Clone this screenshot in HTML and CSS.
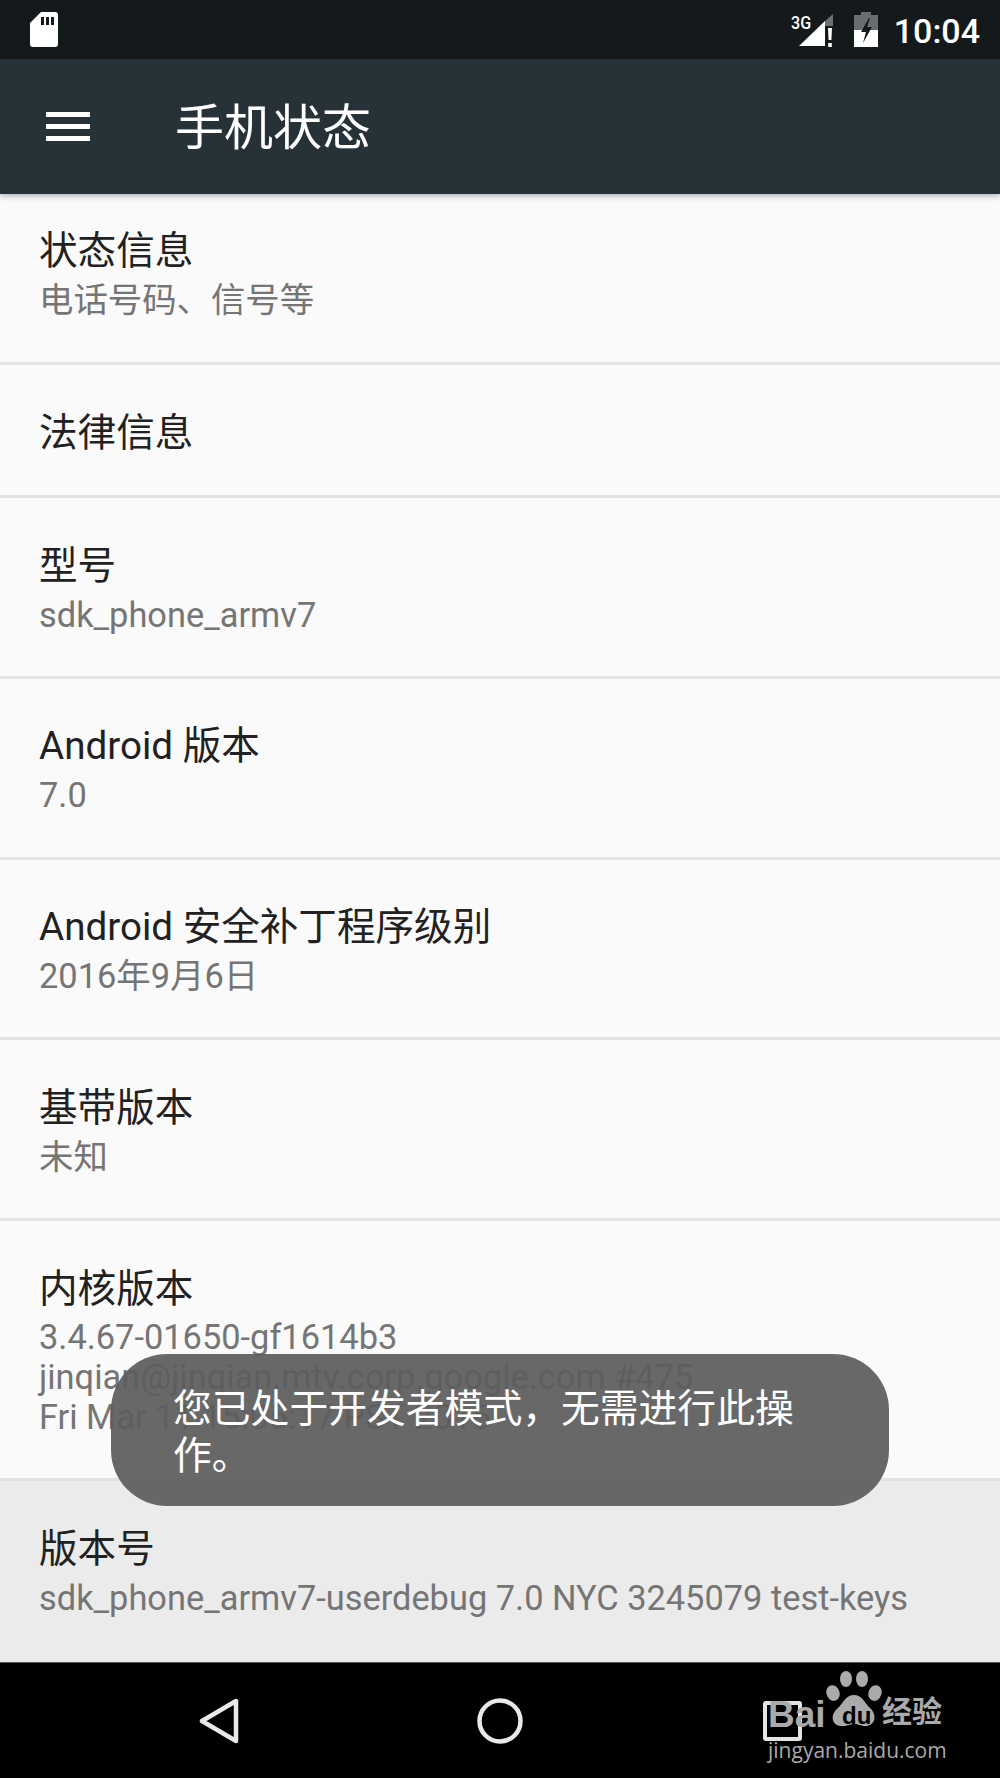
FILE: index.html
```html
<!DOCTYPE html>
<html lang="zh-CN">
<head>
<meta charset="utf-8">
<title>手机状态</title>
<link rel="stylesheet" href="styles.css">
</head>
<body>
<div class="screen">
  <header class="statusbar">
    <svg class="sd" viewBox="0 0 28 35"><path d="M11 0H25a3 3 0 0 1 3 3V32a3 3 0 0 1-3 3H3a3 3 0 0 1-3-3V11Z" fill="#fff"/><path d="M11 5h3v8h-3zM16 5h3v8h-3zM21 5h3v8h-3z" fill="#14191c"/></svg>
    <div class="status-right">
      <div class="signal">
        <svg class="signal-svg" viewBox="0 0 36 34"><path d="M0 33 26 8V33Z" fill="#fff"/><path d="M26 8 34 1V13H26Z" fill="#6e7173"/><path d="M29 15h4l-.6 12h-2.8ZM29.200 30h3.600v4h-3.600Z" fill="#fff"/></svg>
        <span class="net">3G</span>
      </div>
      <svg class="battery" viewBox="0 0 24 35"><path d="M7 0h10v3h7v32H0V3h7Z" fill="#6a6d6f"/><path d="M0 18H24V35H0Z" fill="#fff"/><path d="M15 6 7 20h5L9 31 18 15h-5l3-9Z" fill="#14191c"/></svg>
      <span class="clock">10:04</span>
    </div>
  </header>
  <div class="toolbar">
    <div class="menu"><span></span><span></span><span></span></div>
    <h1 class="toolbar-title">手机状态</h1>
  </div>
  <main class="list">
    <div class="row first"><div class="t">状态信息</div><div class="s">电话号码、信号等</div></div>
    <div class="row single"><div class="t">法律信息</div></div>
    <div class="row"><div class="t">型号</div><div class="s">sdk_phone_armv7</div></div>
    <div class="row"><div class="t">Android 版本</div><div class="s">7.0</div></div>
    <div class="row"><div class="t">Android 安全补丁程序级别</div><div class="s">2016年9月6日</div></div>
    <div class="row"><div class="t">基带版本</div><div class="s">未知</div></div>
    <div class="row kernel"><div class="t">内核版本</div><div class="s">3.4.67-01650-gf1614b3<br>jinqian@jinqian.mtv.corp.google.com #475<br>Fri Mar 11 15:05:17 PST 2016</div></div>
    <div class="row active"><div class="t">版本号</div><div class="s">sdk_phone_armv7-userdebug 7.0 NYC 3245079 test-keys</div></div>
  </main>
  <nav class="navbar">
    <svg class="nav-back" viewBox="0 0 40 46"><path d="M3 23 37 3V43Z" fill="none" stroke="#e9e9e9" stroke-width="4.5" stroke-linejoin="round"/></svg>
    <svg class="nav-home" viewBox="0 0 46 46"><circle cx="23" cy="23" r="20.500" fill="none" stroke="#e9e9e9" stroke-width="4.5"/></svg>
    <div class="nav-recent"></div>
  </nav>
  <div class="toast">您已处于开发者模式，无需进行此操作。</div>
  <div class="watermark">
    <span class="wm-bai">Bai</span>
    <svg class="wm-paw" viewBox="0 0 56 58"><g fill="#aaa"><ellipse cx="7" cy="22" rx="6.500" ry="8" transform="rotate(-20 7 22)"/><ellipse cx="20" cy="8" rx="6" ry="8"/><ellipse cx="36" cy="8" rx="6" ry="8"/><ellipse cx="49" cy="22" rx="6.500" ry="8" transform="rotate(20 49 22)"/><path d="M28 24C36 24 38 31 44 37 52 44 49 56 38 55 33 54 31 53 28 53 24 53 22 55 17 55 6 56 3 44 12 37 18 31 20 24 28 24Z"/></g></svg>
    <span class="wm-du">du</span>
    <span class="wm-cn">经验</span>
    <span class="wm-url">jingyan.baidu.com</span>
  </div>
</div>
</body>
</html>
```
FILE: styles.css
```css
* { box-sizing: border-box; }
html, body { margin: 0; padding: 0; }
body { font-family: Roboto, "Noto Sans CJK SC", sans-serif; background: #000; }
.screen { position: relative; width: 1000px; height: 1778px; overflow: hidden; display: flex; flex-direction: column; background: #fafafa; }

.statusbar { height: 59px; flex: none; background: #14191c; display: flex; align-items: center; justify-content: space-between; padding: 0 20px 0 30px; }
.sd { width: 28px; height: 35px; display: block; margin-bottom: 1px; }
.status-right { display: flex; align-items: center; }
.signal { position: relative; width: 36px; height: 34px; margin-right: 19px; }
.signal-svg { width: 36px; height: 34px; display: block; }
.net { position: absolute; left: -8px; top: 0; font: 500 19px/19px Roboto, sans-serif; color: #fff; transform: scaleX(.85); transform-origin: left; }
.battery { width: 24px; height: 35px; display: block; margin-right: 16px; }
.clock { color: #fff; font-size: 34px; line-height: 40px; font-weight: 500; padding-top: 3px; }

.toolbar { height: 135px; flex: none; background: #263238; display: flex; align-items: center; padding-left: 46px; position: relative; z-index: 1; box-shadow: 0 2px 6px rgba(0,0,0,.3); }
.menu { width: 44px; height: 29px; display: flex; flex-direction: column; justify-content: space-between; margin-right: 85px; }
.menu span { display: block; height: 5px; background: #fff; }
.toolbar-title { margin: 0; padding-top: 4px; font-size: 49px; font-weight: 400; line-height: 60px; color: #fff; }

.list { flex: 1; display: flex; flex-direction: column; }
.row { height: 180.75px; padding: 42.5px 39px 0; border-bottom: 3px solid #e2e2e2; flex: none; }
.row.first { height: 171px; padding-top: 32px; }
.row.single { height: 133px; }
.row.kernel { height: 260px; }
.row.active { height: 181px; background: #ebebeb; border-bottom: 0; }
.t { font-size: 38.6px; line-height: 50px; color: #212121; white-space: nowrap; }
.s { margin-top: 4px; font-size: 34.4px; line-height: 40px; color: #757575; white-space: nowrap; }
.kernel .s { margin-top: 3px; }

.navbar { height: 117px; flex: none; background: #000; border-top: 1px solid #555; display: flex; align-items: flex-start; padding-top: 35px; position: relative; }
.nav-back { width: 40px; height: 46px; display: block; margin-left: 199px; }
.nav-home { width: 46px; height: 46px; display: block; margin-left: 238px; }
.nav-recent { width: 39px; height: 40px; border: 4px solid #e4e4e4; border-radius: 3px; margin-left: 240px; margin-top: 3px; }

.toast { position: absolute; left: 111px; top: 1354px; width: 778px; height: 152px; border-radius: 56px; background: rgba(92,92,92,.93); color: #fff; font-size: 38.8px; line-height: 47px; padding: 31px 62px 0; }

.watermark { position: absolute; left: 760px; top: 1665px; width: 200px; height: 100px; color: #aaa; }
.wm-bai { position: absolute; left: 8px; top: 30px; font: 700 37px/40px "Liberation Sans", sans-serif; color: #aaa; }
.wm-paw { position: absolute; left: 66px; top: 6px; width: 56px; height: 58px; }
.wm-du { position: absolute; left: 82px; top: 38px; font: 700 24px/26px "Liberation Sans", sans-serif; color: #000; }
.wm-cn { position: absolute; left: 122px; top: 26px; font-size: 30px; line-height: 42px; font-weight: 700; }
.wm-url { position: absolute; left: 8px; top: 74px; font: 400 21px/22px "Open Sans", sans-serif; }
```
